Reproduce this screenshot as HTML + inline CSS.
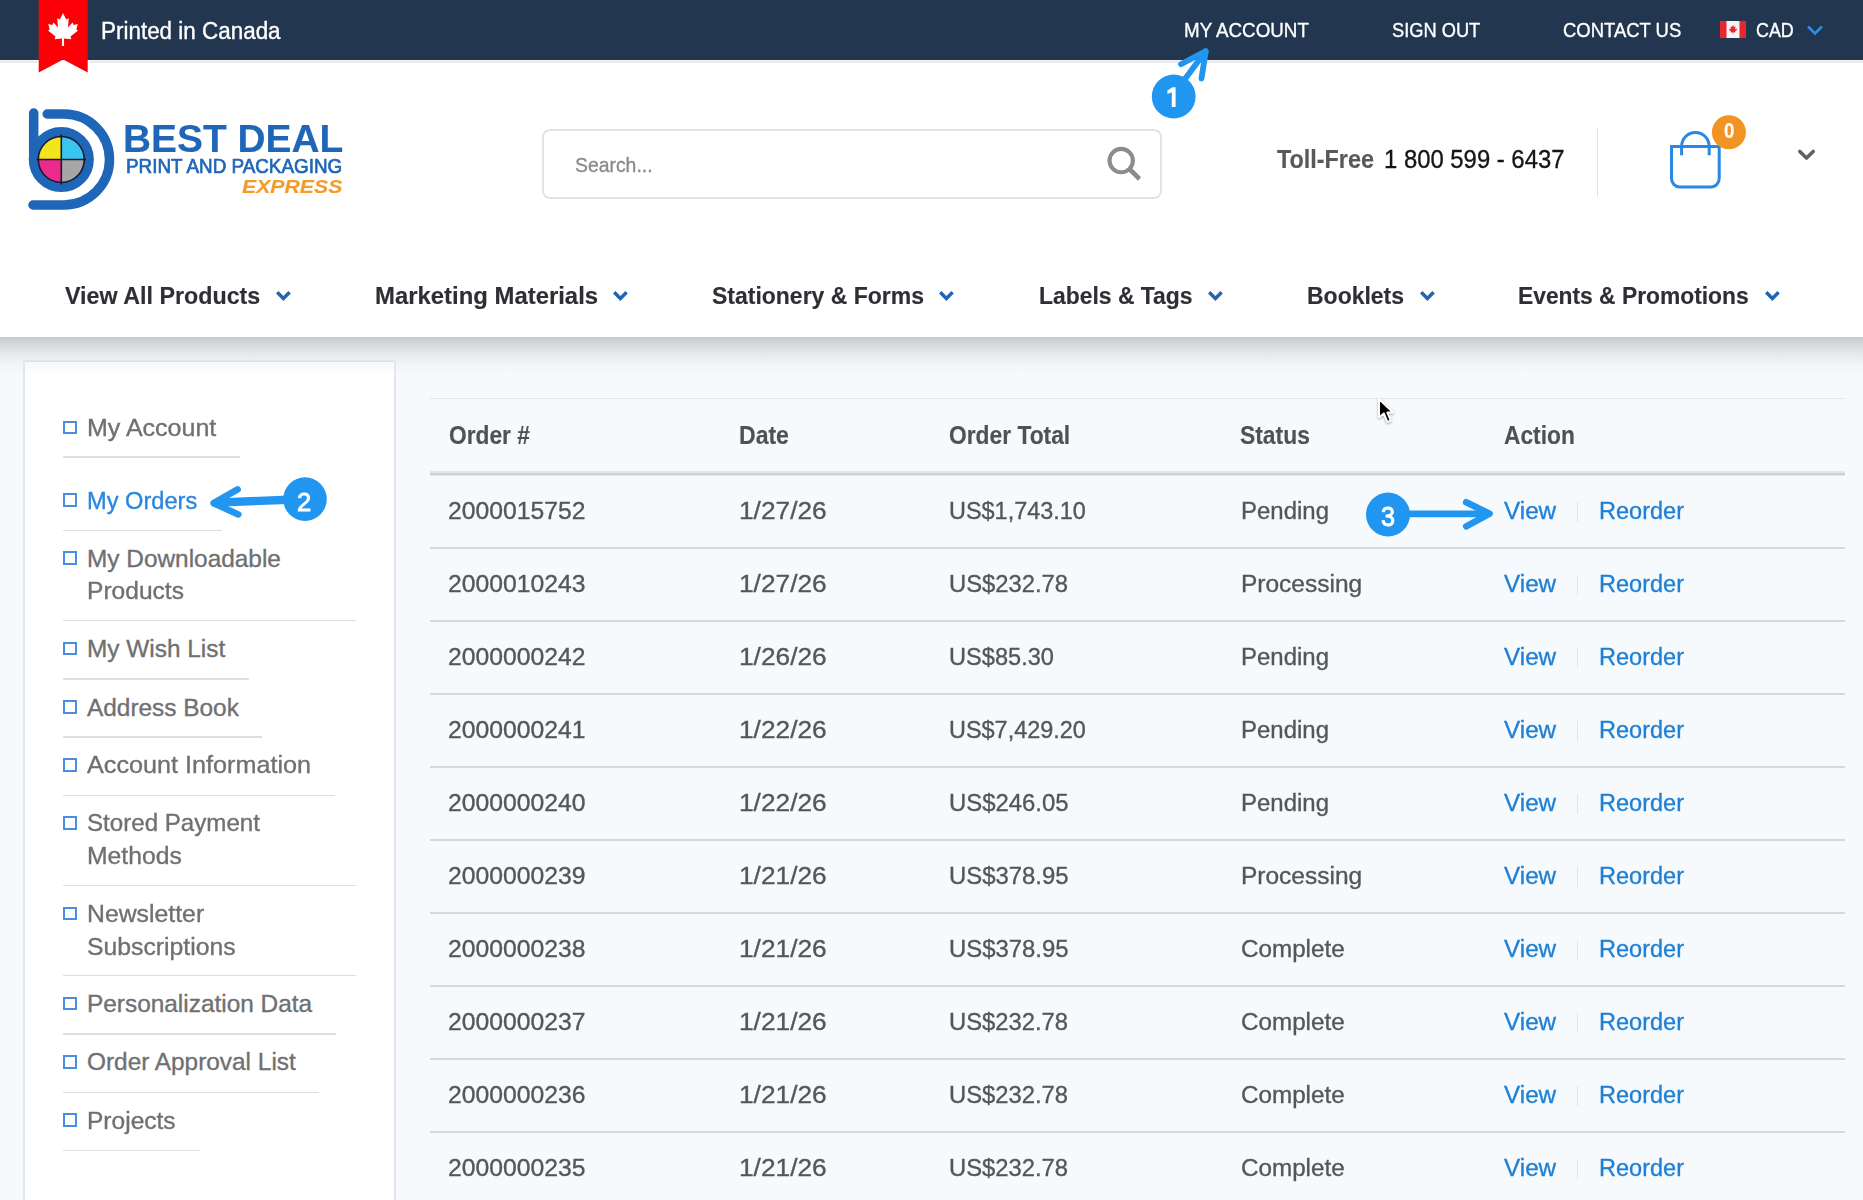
<!DOCTYPE html>
<html><head><meta charset="utf-8"><style>
html,body{margin:0;padding:0;}
body{width:1863px;height:1200px;position:relative;overflow:hidden;background:#f7fafd;font-family:"Liberation Sans",sans-serif;}
.t{position:absolute;white-space:nowrap;transform-origin:0 0;}
.r{position:absolute;box-sizing:content-box;}
svg.r{overflow:visible;}
</style></head><body>
<div class="r" style="left:0px;top:0px;width:1863px;height:60px;background:#22364f;"></div>
<div class="r" style="left:0px;top:60px;width:1863px;height:1px;background:#f4f6f9;"></div>
<div class="r" style="left:0px;top:61px;width:1863px;height:2px;background:#eaeaeb;"></div>
<div class="t" style="left:101.30px;top:19.67px;font-size:23px;line-height:23px;color:#ffffff;-webkit-text-stroke:0.35px #ffffff;transform:scaleX(0.9754);">Printed in Canada</div>
<div class="t" style="left:1184.20px;top:19.78px;font-size:20.5px;line-height:20.5px;color:#ffffff;-webkit-text-stroke:0.35px #ffffff;transform:scaleX(0.9162);">MY ACCOUNT</div>
<div class="t" style="left:1391.80px;top:19.78px;font-size:20.5px;line-height:20.5px;color:#ffffff;-webkit-text-stroke:0.35px #ffffff;transform:scaleX(0.8908);">SIGN OUT</div>
<div class="t" style="left:1562.80px;top:19.78px;font-size:20.5px;line-height:20.5px;color:#ffffff;-webkit-text-stroke:0.35px #ffffff;transform:scaleX(0.9003);">CONTACT US</div>
<div class="t" style="left:1755.50px;top:19.78px;font-size:20.5px;line-height:20.5px;color:#ffffff;-webkit-text-stroke:0.35px #ffffff;transform:scaleX(0.8716);">CAD</div>
<svg class="r" style="left:1720px;top:21px" width="26" height="17" viewBox="0 0 26 17">
<rect x="0" y="0" width="26" height="17" fill="#f4f4f4"/>
<rect x="0" y="0" width="6.5" height="17" fill="#e8262b"/>
<rect x="19.5" y="0" width="6.5" height="17" fill="#e8262b"/>
<path d="M13 4 L14 6 L15.5 5.5 L15 8.5 L16.5 7.5 L17 9 L15 10.5 L15.3 11.5 L13.3 11.3 L13.3 13 H12.7 L12.7 11.3 L10.7 11.5 L11 10.5 L9 9 L9.5 7.5 L11 8.5 L10.5 5.5 L12 6 Z" fill="#e8262b"/>
</svg>
<svg class="r" style="left:1806px;top:24px" width="18" height="12" viewBox="0 0 18 12">
<path d="M2 2.5 L9 9.5 L16 2.5" fill="none" stroke="#2f8ee8" stroke-width="2.6"/>
</svg>
<div class="r" style="left:0px;top:63px;width:1863px;height:274px;background:#ffffff;"></div>
<div class="r" style="left:38px;top:60px;width:51px;height:3px;background:#ffffff;"></div>
<svg class="r" style="left:38px;top:0" width="51" height="74" viewBox="0 0 51 74">
<path d="M0.7 0 H49.7 V72.5 L25.2 59.5 L0.7 72.5 Z" fill="#fb0007"/>
<path fill="#fff" d="M25 13 L28.2 19.5 L30.8 18.2 L30 27.5 L34.5 22.5 L35.7 25 L39.8 24 L38.3 29.5 L40 30.5 L32.5 36.5 L33.3 39.3 L26 38.5 L26.1 46 H23.9 L24 38.5 L16.7 39.3 L17.5 36.5 L10 30.5 L11.7 29.5 L10.2 24 L14.3 25 L15.5 22.5 L20 27.5 L19.2 18.2 L21.8 19.5 Z"/>
</svg>
<svg class="r" style="left:20px;top:100px" width="100" height="120" viewBox="20 100 100 120">
<g fill="none" stroke="#1f66b8" stroke-width="9.5" stroke-linecap="round">
<path d="M33.7 113 V159.5"/>
<circle cx="61.3" cy="159.5" r="27.8"/>
<path d="M47.2 114 H64 A45.5 45.5 0 0 1 64 205 H33"/>
</g>
<path d="M61.3 159.5 V136.5 A23 23 0 0 0 38.3 159.5 Z" fill="#f4e41c"/>
<path d="M61.3 159.5 V136.5 A23 23 0 0 1 84.3 159.5 Z" fill="#38c5f0"/>
<path d="M61.3 159.5 H38.3 A23 23 0 0 0 61.3 182.5 Z" fill="#ec2a8b"/>
<path d="M61.3 159.5 H84.3 A23 23 0 0 1 61.3 182.5 Z" fill="#a6a6a6"/>
<circle cx="61.3" cy="159.5" r="23" fill="none" stroke="#1a1a2a" stroke-width="1.6"/>
<path d="M61.3 134.5 V184.5 M36.5 159.5 H86" stroke="#1a1a2a" stroke-width="1.6"/>
</svg>
<div class="t" style="left:122.60px;top:120.29px;font-size:38px;line-height:38px;color:#1f66b8;font-weight:700;-webkit-text-stroke:0.15px #1f66b8;transform:scaleX(1.0229);">BEST DEAL</div>
<div class="t" style="left:126.00px;top:157.27px;font-size:19.8px;line-height:19.8px;color:#1f66b8;-webkit-text-stroke:0.7px #1f66b8;transform:scaleX(0.9533);">PRINT AND PACKAGING</div>
<div class="t" style="left:242.40px;top:178.93px;font-size:17.6px;line-height:17.6px;color:#f39c2b;font-weight:700;font-style:italic;-webkit-text-stroke:0.15px #f39c2b;transform:scaleX(1.2074);">EXPRESS</div>
<div class="r" style="left:542px;top:129px;width:616px;height:66px;border:2px solid #e4e4e4;border-radius:8px;background:#fff"></div>
<div class="t" style="left:575.20px;top:154.06px;font-size:21px;line-height:21px;color:#8a8a8a;-webkit-text-stroke:0.35px #8a8a8a;transform:scaleX(0.9226);">Search...</div>
<svg class="r" style="left:1100px;top:140px" width="50" height="50" viewBox="1100 140 50 50">
<circle cx="1121.2" cy="160.6" r="11.7" fill="none" stroke="#8c8c8c" stroke-width="4.1"/>
<path d="M1129.5 169 L1139.5 179" stroke="#8c8c8c" stroke-width="4.6"/>
</svg>
<div class="t" style="left:1276.60px;top:147.45px;font-size:25.5px;line-height:25.5px;color:#58595b;font-weight:700;-webkit-text-stroke:0.15px #58595b;transform:scaleX(0.9166);">Toll-Free</div>
<div class="t" style="left:1383.70px;top:147.45px;font-size:25.5px;line-height:25.5px;color:#151515;-webkit-text-stroke:0.35px #151515;transform:scaleX(0.9358);">1 800 599 - 6437</div>
<div class="r" style="left:1597px;top:128px;width:1px;height:69px;background:#e3e3e3;"></div>
<svg class="r" style="left:1660px;top:110px" width="90" height="90" viewBox="1660 110 90 90">
<path d="M1671.5 146.6 H1719.2 V178.6 A8.5 8.5 0 0 1 1710.7 187.1 H1680 A8.5 8.5 0 0 1 1671.5 178.6 Z" fill="none" stroke="#2a87e4" stroke-width="3"/>
<path d="M1681.6 155.2 V146.3 A13.8 13.8 0 0 1 1709.2 146.3 V155.2" fill="none" stroke="#2a87e4" stroke-width="3"/>
<circle cx="1728.9" cy="132.3" r="17" fill="#f29423"/>
</svg>
<div class="t" style="left:1723.50px;top:121.13px;font-size:21.5px;line-height:21.5px;color:#ffffff;font-weight:700;-webkit-text-stroke:0.15px #ffffff;transform:scaleX(0.8721);">0</div>
<svg class="r" style="left:1790px;top:140px" width="30" height="30" viewBox="1790 140 30 30">
<path d="M1799.8 151.5 L1806.5 158 L1813.2 151.5" fill="none" stroke="#5f6166" stroke-width="3.6" stroke-linecap="round" stroke-linejoin="round"/>
</svg>
<div class="t" style="left:64.70px;top:283.64px;font-size:24.8px;line-height:24.8px;color:#2d2f34;font-weight:700;-webkit-text-stroke:0.15px #2d2f34;transform:scaleX(0.9386);">View All Products</div>
<svg class="r" style="left:274.1px;top:288px" width="20" height="15" viewBox="0 0 20 15">
<path d="M3.2 4.3 L9.4 10.5 L15.6 4.3" fill="none" stroke="#2164b5" stroke-width="3.4"/></svg>
<div class="t" style="left:374.60px;top:283.64px;font-size:24.8px;line-height:24.8px;color:#2d2f34;font-weight:700;-webkit-text-stroke:0.15px #2d2f34;transform:scaleX(0.9636);">Marketing Materials</div>
<svg class="r" style="left:611.0px;top:288px" width="20" height="15" viewBox="0 0 20 15">
<path d="M3.2 4.3 L9.4 10.5 L15.6 4.3" fill="none" stroke="#2164b5" stroke-width="3.4"/></svg>
<div class="t" style="left:712.10px;top:283.64px;font-size:24.8px;line-height:24.8px;color:#2d2f34;font-weight:700;-webkit-text-stroke:0.15px #2d2f34;transform:scaleX(0.9267);">Stationery &amp; Forms</div>
<svg class="r" style="left:937.4px;top:288px" width="20" height="15" viewBox="0 0 20 15">
<path d="M3.2 4.3 L9.4 10.5 L15.6 4.3" fill="none" stroke="#2164b5" stroke-width="3.4"/></svg>
<div class="t" style="left:1039.00px;top:283.64px;font-size:24.8px;line-height:24.8px;color:#2d2f34;font-weight:700;-webkit-text-stroke:0.15px #2d2f34;transform:scaleX(0.9236);">Labels &amp; Tags</div>
<svg class="r" style="left:1206.0px;top:288px" width="20" height="15" viewBox="0 0 20 15">
<path d="M3.2 4.3 L9.4 10.5 L15.6 4.3" fill="none" stroke="#2164b5" stroke-width="3.4"/></svg>
<div class="t" style="left:1307.00px;top:283.64px;font-size:24.8px;line-height:24.8px;color:#2d2f34;font-weight:700;-webkit-text-stroke:0.15px #2d2f34;transform:scaleX(0.9268);">Booklets</div>
<svg class="r" style="left:1417.5px;top:288px" width="20" height="15" viewBox="0 0 20 15">
<path d="M3.2 4.3 L9.4 10.5 L15.6 4.3" fill="none" stroke="#2164b5" stroke-width="3.4"/></svg>
<div class="t" style="left:1518.40px;top:283.64px;font-size:24.8px;line-height:24.8px;color:#2d2f34;font-weight:700;-webkit-text-stroke:0.15px #2d2f34;transform:scaleX(0.9197);">Events &amp; Promotions</div>
<svg class="r" style="left:1762.7px;top:288px" width="20" height="15" viewBox="0 0 20 15">
<path d="M3.2 4.3 L9.4 10.5 L15.6 4.3" fill="none" stroke="#2164b5" stroke-width="3.4"/></svg>
<div class="r" style="left:0;top:337px;width:1863px;height:38px;background:linear-gradient(#c8cacd,#d8dbde 22%,#e8ebee 48%,#f2f5f8 72%,#f7fafd)"></div>
<div class="r" style="left:23px;top:359.5px;width:369px;height:900px;border:2px solid #e3e6ea;background:#fff"></div>
<div class="r" style="left:24.5px;top:361px;width:369px;height:14px;background:linear-gradient(rgba(40,50,60,0.035),rgba(40,50,60,0))"></div>
<div class="t" style="left:87.00px;top:415.68px;font-size:24.4px;line-height:24.4px;color:#6f7072;-webkit-text-stroke:0.35px #6f7072;transform:scaleX(1.0250);">My Account</div>
<div class="r" style="left:63px;top:420.5px;width:10px;height:9.5px;border:2px solid #4a8fde"></div>
<div class="r" style="left:63px;top:456.0px;width:176.7px;height:1.6px;background:#dedede"></div>
<div class="t" style="left:87.00px;top:488.58px;font-size:24.4px;line-height:24.4px;color:#2b86de;-webkit-text-stroke:0.35px #2b86de;transform:scaleX(0.9689);">My Orders</div>
<div class="r" style="left:63px;top:493.4px;width:10px;height:9.5px;border:2px solid #4a8fde"></div>
<div class="r" style="left:63px;top:529.7px;width:159.1px;height:1.6px;background:#dedede"></div>
<div class="t" style="left:87.00px;top:546.58px;font-size:24.4px;line-height:24.4px;color:#6f7072;-webkit-text-stroke:0.35px #6f7072;">My Downloadable</div>
<div class="t" style="left:87.00px;top:579.48px;font-size:24.4px;line-height:24.4px;color:#6f7072;-webkit-text-stroke:0.35px #6f7072;transform:scaleX(1.0075);">Products</div>
<div class="r" style="left:63px;top:551.4px;width:10px;height:9.5px;border:2px solid #4a8fde"></div>
<div class="r" style="left:63px;top:619.9px;width:292.7px;height:1.6px;background:#dedede"></div>
<div class="t" style="left:87.00px;top:636.78px;font-size:24.4px;line-height:24.4px;color:#6f7072;-webkit-text-stroke:0.35px #6f7072;">My Wish List</div>
<div class="r" style="left:63px;top:641.6px;width:10px;height:9.5px;border:2px solid #4a8fde"></div>
<div class="r" style="left:63px;top:678.4px;width:185.7px;height:1.6px;background:#dedede"></div>
<div class="t" style="left:87.00px;top:695.58px;font-size:24.4px;line-height:24.4px;color:#6f7072;-webkit-text-stroke:0.35px #6f7072;">Address Book</div>
<div class="r" style="left:63px;top:700.4px;width:10px;height:9.5px;border:2px solid #4a8fde"></div>
<div class="r" style="left:63px;top:736.1px;width:199.0px;height:1.6px;background:#dedede"></div>
<div class="t" style="left:87.00px;top:753.38px;font-size:24.4px;line-height:24.4px;color:#6f7072;-webkit-text-stroke:0.35px #6f7072;transform:scaleX(1.0327);">Account Information</div>
<div class="r" style="left:63px;top:758.2px;width:10px;height:9.5px;border:2px solid #4a8fde"></div>
<div class="r" style="left:63px;top:794.7px;width:271.8px;height:1.6px;background:#dedede"></div>
<div class="t" style="left:87.00px;top:811.38px;font-size:24.4px;line-height:24.4px;color:#6f7072;-webkit-text-stroke:0.35px #6f7072;transform:scaleX(0.9889);">Stored Payment</div>
<div class="t" style="left:87.00px;top:844.38px;font-size:24.4px;line-height:24.4px;color:#6f7072;-webkit-text-stroke:0.35px #6f7072;transform:scaleX(1.0139);">Methods</div>
<div class="r" style="left:63px;top:816.2px;width:10px;height:9.5px;border:2px solid #4a8fde"></div>
<div class="r" style="left:63px;top:884.6px;width:292.8px;height:1.6px;background:#dedede"></div>
<div class="t" style="left:87.00px;top:901.98px;font-size:24.4px;line-height:24.4px;color:#6f7072;-webkit-text-stroke:0.35px #6f7072;transform:scaleX(1.0168);">Newsletter</div>
<div class="t" style="left:87.00px;top:934.68px;font-size:24.4px;line-height:24.4px;color:#6f7072;-webkit-text-stroke:0.35px #6f7072;transform:scaleX(1.0150);">Subscriptions</div>
<div class="r" style="left:63px;top:906.8px;width:10px;height:9.5px;border:2px solid #4a8fde"></div>
<div class="r" style="left:63px;top:974.7px;width:292.6px;height:1.6px;background:#dedede"></div>
<div class="t" style="left:87.00px;top:991.98px;font-size:24.4px;line-height:24.4px;color:#6f7072;-webkit-text-stroke:0.35px #6f7072;">Personalization Data</div>
<div class="r" style="left:63px;top:996.8px;width:10px;height:9.5px;border:2px solid #4a8fde"></div>
<div class="r" style="left:63px;top:1033.2px;width:273.2px;height:1.6px;background:#dedede"></div>
<div class="t" style="left:87.00px;top:1050.48px;font-size:24.4px;line-height:24.4px;color:#6f7072;-webkit-text-stroke:0.35px #6f7072;">Order Approval List</div>
<div class="r" style="left:63px;top:1055.3px;width:10px;height:9.5px;border:2px solid #4a8fde"></div>
<div class="r" style="left:63px;top:1091.7px;width:255.5px;height:1.6px;background:#dedede"></div>
<div class="t" style="left:87.00px;top:1108.58px;font-size:24.4px;line-height:24.4px;color:#6f7072;-webkit-text-stroke:0.35px #6f7072;transform:scaleX(1.0059);">Projects</div>
<div class="r" style="left:63px;top:1113.4px;width:10px;height:9.5px;border:2px solid #4a8fde"></div>
<div class="r" style="left:63px;top:1149.8px;width:136.6px;height:1.6px;background:#dedede"></div>
<div class="r" style="left:430px;top:398px;width:1415px;height:1px;background:#e3e6e9;"></div>
<div class="r" style="left:430px;top:471px;width:1415px;height:2px;background:#e4e7ea;"></div>
<div class="r" style="left:430px;top:473px;width:1415px;height:2px;background:#cdd0d4;"></div>
<div class="r" style="left:430px;top:475px;width:1415px;height:1px;background:#e2e5e8;"></div>
<div class="t" style="left:448.70px;top:422.56px;font-size:24.9px;line-height:24.9px;color:#4f5155;font-weight:700;-webkit-text-stroke:0.15px #4f5155;transform:scaleX(0.9138);">Order #</div>
<div class="t" style="left:739.30px;top:422.56px;font-size:24.9px;line-height:24.9px;color:#4f5155;font-weight:700;-webkit-text-stroke:0.15px #4f5155;transform:scaleX(0.9254);">Date</div>
<div class="t" style="left:948.70px;top:422.56px;font-size:24.9px;line-height:24.9px;color:#4f5155;font-weight:700;-webkit-text-stroke:0.15px #4f5155;transform:scaleX(0.9157);">Order Total</div>
<div class="t" style="left:1240.00px;top:422.56px;font-size:24.9px;line-height:24.9px;color:#4f5155;font-weight:700;-webkit-text-stroke:0.15px #4f5155;transform:scaleX(0.9187);">Status</div>
<div class="t" style="left:1504.00px;top:422.56px;font-size:24.9px;line-height:24.9px;color:#4f5155;font-weight:700;-webkit-text-stroke:0.15px #4f5155;transform:scaleX(0.9143);">Action</div>
<div class="t" style="left:448.30px;top:498.81px;font-size:24.6px;line-height:24.6px;color:#53565b;-webkit-text-stroke:0.35px #53565b;transform:scaleX(1.0053);">2000015752</div>
<div class="t" style="left:739.40px;top:498.81px;font-size:24.6px;line-height:24.6px;color:#53565b;-webkit-text-stroke:0.35px #53565b;transform:scaleX(1.0686);">1/27/26</div>
<div class="t" style="left:948.70px;top:498.81px;font-size:24.6px;line-height:24.6px;color:#53565b;-webkit-text-stroke:0.35px #53565b;transform:scaleX(0.9536);">US$1,743.10</div>
<div class="t" style="left:1240.50px;top:498.81px;font-size:24.6px;line-height:24.6px;color:#53565b;-webkit-text-stroke:0.35px #53565b;transform:scaleX(0.9747);">Pending</div>
<div class="t" style="left:1504.00px;top:498.81px;font-size:24.6px;line-height:24.6px;color:#1f80d5;-webkit-text-stroke:0.35px #1f80d5;transform:scaleX(0.9861);">View</div>
<div class="t" style="left:1598.90px;top:498.81px;font-size:24.6px;line-height:24.6px;color:#1f80d5;-webkit-text-stroke:0.35px #1f80d5;transform:scaleX(0.9571);">Reorder</div>
<div class="r" style="left:1577px;top:502px;width:1px;height:20px;background:#e2e4e6;"></div>
<div class="r" style="left:430px;top:547px;width:1415px;height:2px;background:#d6d9dc;"></div>
<div class="t" style="left:448.30px;top:571.81px;font-size:24.6px;line-height:24.6px;color:#53565b;-webkit-text-stroke:0.35px #53565b;transform:scaleX(1.0053);">2000010243</div>
<div class="t" style="left:739.40px;top:571.81px;font-size:24.6px;line-height:24.6px;color:#53565b;-webkit-text-stroke:0.35px #53565b;transform:scaleX(1.0686);">1/27/26</div>
<div class="t" style="left:948.70px;top:571.81px;font-size:24.6px;line-height:24.6px;color:#53565b;-webkit-text-stroke:0.35px #53565b;transform:scaleX(0.9675);">US$232.78</div>
<div class="t" style="left:1240.50px;top:571.81px;font-size:24.6px;line-height:24.6px;color:#53565b;-webkit-text-stroke:0.35px #53565b;transform:scaleX(0.9961);">Processing</div>
<div class="t" style="left:1504.00px;top:571.81px;font-size:24.6px;line-height:24.6px;color:#1f80d5;-webkit-text-stroke:0.35px #1f80d5;transform:scaleX(0.9861);">View</div>
<div class="t" style="left:1598.90px;top:571.81px;font-size:24.6px;line-height:24.6px;color:#1f80d5;-webkit-text-stroke:0.35px #1f80d5;transform:scaleX(0.9571);">Reorder</div>
<div class="r" style="left:1577px;top:575px;width:1px;height:20px;background:#e2e4e6;"></div>
<div class="r" style="left:430px;top:620px;width:1415px;height:2px;background:#d6d9dc;"></div>
<div class="t" style="left:448.30px;top:644.81px;font-size:24.6px;line-height:24.6px;color:#53565b;-webkit-text-stroke:0.35px #53565b;transform:scaleX(1.0053);">2000000242</div>
<div class="t" style="left:739.40px;top:644.81px;font-size:24.6px;line-height:24.6px;color:#53565b;-webkit-text-stroke:0.35px #53565b;transform:scaleX(1.0686);">1/26/26</div>
<div class="t" style="left:948.70px;top:644.81px;font-size:24.6px;line-height:24.6px;color:#53565b;-webkit-text-stroke:0.35px #53565b;transform:scaleX(0.9592);">US$85.30</div>
<div class="t" style="left:1240.50px;top:644.81px;font-size:24.6px;line-height:24.6px;color:#53565b;-webkit-text-stroke:0.35px #53565b;transform:scaleX(0.9747);">Pending</div>
<div class="t" style="left:1504.00px;top:644.81px;font-size:24.6px;line-height:24.6px;color:#1f80d5;-webkit-text-stroke:0.35px #1f80d5;transform:scaleX(0.9861);">View</div>
<div class="t" style="left:1598.90px;top:644.81px;font-size:24.6px;line-height:24.6px;color:#1f80d5;-webkit-text-stroke:0.35px #1f80d5;transform:scaleX(0.9571);">Reorder</div>
<div class="r" style="left:1577px;top:648px;width:1px;height:20px;background:#e2e4e6;"></div>
<div class="r" style="left:430px;top:693px;width:1415px;height:2px;background:#d6d9dc;"></div>
<div class="t" style="left:448.30px;top:717.81px;font-size:24.6px;line-height:24.6px;color:#53565b;-webkit-text-stroke:0.35px #53565b;transform:scaleX(1.0053);">2000000241</div>
<div class="t" style="left:739.40px;top:717.81px;font-size:24.6px;line-height:24.6px;color:#53565b;-webkit-text-stroke:0.35px #53565b;transform:scaleX(1.0686);">1/22/26</div>
<div class="t" style="left:948.70px;top:717.81px;font-size:24.6px;line-height:24.6px;color:#53565b;-webkit-text-stroke:0.35px #53565b;transform:scaleX(0.9536);">US$7,429.20</div>
<div class="t" style="left:1240.50px;top:717.81px;font-size:24.6px;line-height:24.6px;color:#53565b;-webkit-text-stroke:0.35px #53565b;transform:scaleX(0.9747);">Pending</div>
<div class="t" style="left:1504.00px;top:717.81px;font-size:24.6px;line-height:24.6px;color:#1f80d5;-webkit-text-stroke:0.35px #1f80d5;transform:scaleX(0.9861);">View</div>
<div class="t" style="left:1598.90px;top:717.81px;font-size:24.6px;line-height:24.6px;color:#1f80d5;-webkit-text-stroke:0.35px #1f80d5;transform:scaleX(0.9571);">Reorder</div>
<div class="r" style="left:1577px;top:721px;width:1px;height:20px;background:#e2e4e6;"></div>
<div class="r" style="left:430px;top:766px;width:1415px;height:2px;background:#d6d9dc;"></div>
<div class="t" style="left:448.30px;top:790.81px;font-size:24.6px;line-height:24.6px;color:#53565b;-webkit-text-stroke:0.35px #53565b;transform:scaleX(1.0053);">2000000240</div>
<div class="t" style="left:739.40px;top:790.81px;font-size:24.6px;line-height:24.6px;color:#53565b;-webkit-text-stroke:0.35px #53565b;transform:scaleX(1.0686);">1/22/26</div>
<div class="t" style="left:948.70px;top:790.81px;font-size:24.6px;line-height:24.6px;color:#53565b;-webkit-text-stroke:0.35px #53565b;transform:scaleX(0.9715);">US$246.05</div>
<div class="t" style="left:1240.50px;top:790.81px;font-size:24.6px;line-height:24.6px;color:#53565b;-webkit-text-stroke:0.35px #53565b;transform:scaleX(0.9747);">Pending</div>
<div class="t" style="left:1504.00px;top:790.81px;font-size:24.6px;line-height:24.6px;color:#1f80d5;-webkit-text-stroke:0.35px #1f80d5;transform:scaleX(0.9861);">View</div>
<div class="t" style="left:1598.90px;top:790.81px;font-size:24.6px;line-height:24.6px;color:#1f80d5;-webkit-text-stroke:0.35px #1f80d5;transform:scaleX(0.9571);">Reorder</div>
<div class="r" style="left:1577px;top:794px;width:1px;height:20px;background:#e2e4e6;"></div>
<div class="r" style="left:430px;top:839px;width:1415px;height:2px;background:#d6d9dc;"></div>
<div class="t" style="left:448.30px;top:863.81px;font-size:24.6px;line-height:24.6px;color:#53565b;-webkit-text-stroke:0.35px #53565b;transform:scaleX(1.0053);">2000000239</div>
<div class="t" style="left:739.40px;top:863.81px;font-size:24.6px;line-height:24.6px;color:#53565b;-webkit-text-stroke:0.35px #53565b;transform:scaleX(1.0686);">1/21/26</div>
<div class="t" style="left:948.70px;top:863.81px;font-size:24.6px;line-height:24.6px;color:#53565b;-webkit-text-stroke:0.35px #53565b;transform:scaleX(0.9715);">US$378.95</div>
<div class="t" style="left:1240.50px;top:863.81px;font-size:24.6px;line-height:24.6px;color:#53565b;-webkit-text-stroke:0.35px #53565b;transform:scaleX(0.9961);">Processing</div>
<div class="t" style="left:1504.00px;top:863.81px;font-size:24.6px;line-height:24.6px;color:#1f80d5;-webkit-text-stroke:0.35px #1f80d5;transform:scaleX(0.9861);">View</div>
<div class="t" style="left:1598.90px;top:863.81px;font-size:24.6px;line-height:24.6px;color:#1f80d5;-webkit-text-stroke:0.35px #1f80d5;transform:scaleX(0.9571);">Reorder</div>
<div class="r" style="left:1577px;top:867px;width:1px;height:20px;background:#e2e4e6;"></div>
<div class="r" style="left:430px;top:912px;width:1415px;height:2px;background:#d6d9dc;"></div>
<div class="t" style="left:448.30px;top:936.81px;font-size:24.6px;line-height:24.6px;color:#53565b;-webkit-text-stroke:0.35px #53565b;transform:scaleX(1.0053);">2000000238</div>
<div class="t" style="left:739.40px;top:936.81px;font-size:24.6px;line-height:24.6px;color:#53565b;-webkit-text-stroke:0.35px #53565b;transform:scaleX(1.0686);">1/21/26</div>
<div class="t" style="left:948.70px;top:936.81px;font-size:24.6px;line-height:24.6px;color:#53565b;-webkit-text-stroke:0.35px #53565b;transform:scaleX(0.9715);">US$378.95</div>
<div class="t" style="left:1240.50px;top:936.81px;font-size:24.6px;line-height:24.6px;color:#53565b;-webkit-text-stroke:0.35px #53565b;transform:scaleX(0.9849);">Complete</div>
<div class="t" style="left:1504.00px;top:936.81px;font-size:24.6px;line-height:24.6px;color:#1f80d5;-webkit-text-stroke:0.35px #1f80d5;transform:scaleX(0.9861);">View</div>
<div class="t" style="left:1598.90px;top:936.81px;font-size:24.6px;line-height:24.6px;color:#1f80d5;-webkit-text-stroke:0.35px #1f80d5;transform:scaleX(0.9571);">Reorder</div>
<div class="r" style="left:1577px;top:940px;width:1px;height:20px;background:#e2e4e6;"></div>
<div class="r" style="left:430px;top:985px;width:1415px;height:2px;background:#d6d9dc;"></div>
<div class="t" style="left:448.30px;top:1009.81px;font-size:24.6px;line-height:24.6px;color:#53565b;-webkit-text-stroke:0.35px #53565b;transform:scaleX(1.0053);">2000000237</div>
<div class="t" style="left:739.40px;top:1009.81px;font-size:24.6px;line-height:24.6px;color:#53565b;-webkit-text-stroke:0.35px #53565b;transform:scaleX(1.0686);">1/21/26</div>
<div class="t" style="left:948.70px;top:1009.81px;font-size:24.6px;line-height:24.6px;color:#53565b;-webkit-text-stroke:0.35px #53565b;transform:scaleX(0.9675);">US$232.78</div>
<div class="t" style="left:1240.50px;top:1009.81px;font-size:24.6px;line-height:24.6px;color:#53565b;-webkit-text-stroke:0.35px #53565b;transform:scaleX(0.9849);">Complete</div>
<div class="t" style="left:1504.00px;top:1009.81px;font-size:24.6px;line-height:24.6px;color:#1f80d5;-webkit-text-stroke:0.35px #1f80d5;transform:scaleX(0.9861);">View</div>
<div class="t" style="left:1598.90px;top:1009.81px;font-size:24.6px;line-height:24.6px;color:#1f80d5;-webkit-text-stroke:0.35px #1f80d5;transform:scaleX(0.9571);">Reorder</div>
<div class="r" style="left:1577px;top:1013px;width:1px;height:20px;background:#e2e4e6;"></div>
<div class="r" style="left:430px;top:1058px;width:1415px;height:2px;background:#d6d9dc;"></div>
<div class="t" style="left:448.30px;top:1082.81px;font-size:24.6px;line-height:24.6px;color:#53565b;-webkit-text-stroke:0.35px #53565b;transform:scaleX(1.0053);">2000000236</div>
<div class="t" style="left:739.40px;top:1082.81px;font-size:24.6px;line-height:24.6px;color:#53565b;-webkit-text-stroke:0.35px #53565b;transform:scaleX(1.0686);">1/21/26</div>
<div class="t" style="left:948.70px;top:1082.81px;font-size:24.6px;line-height:24.6px;color:#53565b;-webkit-text-stroke:0.35px #53565b;transform:scaleX(0.9675);">US$232.78</div>
<div class="t" style="left:1240.50px;top:1082.81px;font-size:24.6px;line-height:24.6px;color:#53565b;-webkit-text-stroke:0.35px #53565b;transform:scaleX(0.9849);">Complete</div>
<div class="t" style="left:1504.00px;top:1082.81px;font-size:24.6px;line-height:24.6px;color:#1f80d5;-webkit-text-stroke:0.35px #1f80d5;transform:scaleX(0.9861);">View</div>
<div class="t" style="left:1598.90px;top:1082.81px;font-size:24.6px;line-height:24.6px;color:#1f80d5;-webkit-text-stroke:0.35px #1f80d5;transform:scaleX(0.9571);">Reorder</div>
<div class="r" style="left:1577px;top:1086px;width:1px;height:20px;background:#e2e4e6;"></div>
<div class="r" style="left:430px;top:1131px;width:1415px;height:2px;background:#d6d9dc;"></div>
<div class="t" style="left:448.30px;top:1155.81px;font-size:24.6px;line-height:24.6px;color:#53565b;-webkit-text-stroke:0.35px #53565b;transform:scaleX(1.0053);">2000000235</div>
<div class="t" style="left:739.40px;top:1155.81px;font-size:24.6px;line-height:24.6px;color:#53565b;-webkit-text-stroke:0.35px #53565b;transform:scaleX(1.0686);">1/21/26</div>
<div class="t" style="left:948.70px;top:1155.81px;font-size:24.6px;line-height:24.6px;color:#53565b;-webkit-text-stroke:0.35px #53565b;transform:scaleX(0.9675);">US$232.78</div>
<div class="t" style="left:1240.50px;top:1155.81px;font-size:24.6px;line-height:24.6px;color:#53565b;-webkit-text-stroke:0.35px #53565b;transform:scaleX(0.9849);">Complete</div>
<div class="t" style="left:1504.00px;top:1155.81px;font-size:24.6px;line-height:24.6px;color:#1f80d5;-webkit-text-stroke:0.35px #1f80d5;transform:scaleX(0.9861);">View</div>
<div class="t" style="left:1598.90px;top:1155.81px;font-size:24.6px;line-height:24.6px;color:#1f80d5;-webkit-text-stroke:0.35px #1f80d5;transform:scaleX(0.9571);">Reorder</div>
<div class="r" style="left:1577px;top:1159px;width:1px;height:20px;background:#e2e4e6;"></div>
<svg class="r" style="left:0;top:0" width="1863" height="1200" viewBox="0 0 1863 1200">
<g fill="none" stroke="#2196f0" stroke-linecap="round" stroke-linejoin="round">
<path d="M1182 83 L1205.5 51.5" stroke-width="5.8"/><path d="M1181 64.2 L1205.8 51 L1201.5 78.5" stroke-width="5.8"/>
<path d="M288 499.8 L216 502.6" stroke-width="8.4" stroke-linecap="butt"/><path d="M237.6 489.4 L213.6 503.2 L238.3 514.4" stroke-width="6.6"/>
<path d="M1400 513.8 L1484 513.8" stroke-width="6.8" stroke-linecap="butt"/><path d="M1466.2 502.3 L1489.6 513.7 L1466.2 526.3" stroke-width="6.6"/>
</g>
<circle cx="1173.7" cy="96.5" r="21.9" fill="#2196f0"/>
<circle cx="305" cy="499.1" r="21.8" fill="#2196f0"/>
<circle cx="1388" cy="514.5" r="22" fill="#2196f0"/>
</svg>
<svg class="r" style="left:1160px;top:80px" width="30" height="35" viewBox="1160 80 30 35"><path d="M1175.6 87.3 V107 H1171.8 V92.3 L1167.4 93.9 V90.6 L1172.6 87.3 Z" fill="#fff"/></svg>
<div class="t" style="left:296.90px;top:488.51px;font-size:26.5px;line-height:26.5px;color:#ffffff;-webkit-text-stroke:0.9px #ffffff;transform:scaleX(0.9636);">2</div>
<div class="t" style="left:1380.80px;top:503.69px;font-size:27px;line-height:27px;color:#ffffff;-webkit-text-stroke:0.9px #ffffff;transform:scaleX(0.9325);">3</div>
<svg class="r" style="left:1370px;top:392px" width="30" height="36" viewBox="1370 392 30 36">
<path d="M1379 399 L1379 417.5 L1383.8 413.5 L1387.3 422 L1390.8 420.6 L1387.4 412.6 L1393.2 412.6 Z" fill="#000" stroke="#fff" stroke-width="2" stroke-linejoin="round" style="filter:drop-shadow(0.5px 1.5px 1.2px rgba(0,0,0,0.35))"/>
</svg>
</body></html>
